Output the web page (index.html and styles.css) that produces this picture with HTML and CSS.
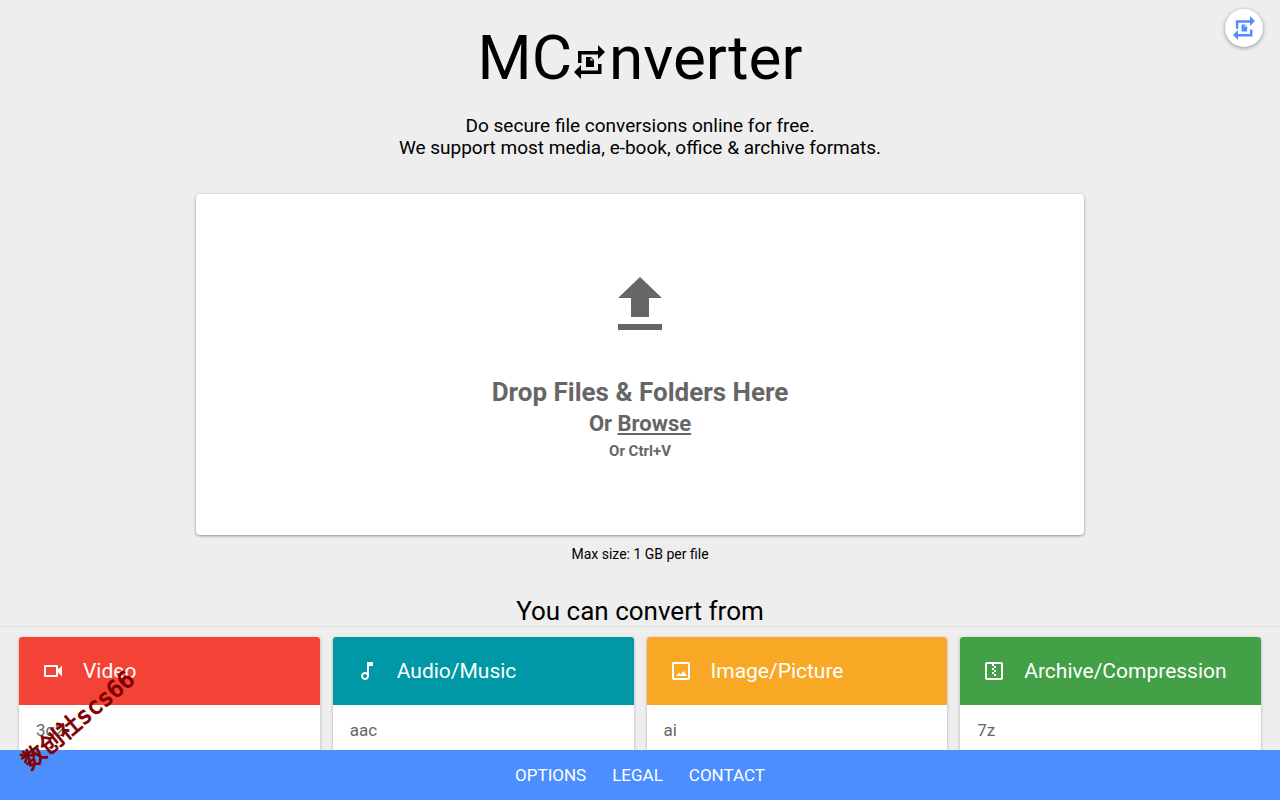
FILE: index.html
```
<!DOCTYPE html>
<html lang="en">
<head>
    <meta charset="utf-8">
    <title>MConverter</title>
    <meta name="viewport" content="width=device-width, initial-scale=1.0">
    <link rel="stylesheet" href="styles.css">
</head>
<body>
    <svg class="symbols" aria-hidden="true">
        <symbol id="logo" viewBox="0 0 31 34">
            <path d="M4 6h20V0l7 7-7 7V9.500H7.500V18H4z"/>
            <path d="M27.500 29H7v5l-7-7 7-7v5.500h17V19h3.500z"/>
            <path fill-rule="evenodd" d="M12 12h5l3 3v7h-8zM16.500 12.800v2.700h2.700z"/>
        </symbol>
    </svg>
    <button class="fab" aria-label="Convert">
        <svg class="fab-icon"><use href="#logo"/></svg>
    </button>
    <main>
        <h1>MC<svg class="title-icon"><use href="#logo"/></svg>nverter</h1>
        <p class="intro">Do secure file conversions online for free.<br>We support most media, e-book, office &amp; archive formats.</p>
        <div class="drop">
            <svg class="drop-icon" viewBox="0 0 44 53"><path d="M22 0l22 21H31v19H13V21H0zM0 47h44v6H0z"/></svg>
            <div class="drop-title">Drop Files &amp; Folders Here</div>
            <div class="drop-browse">Or <a href="#browse">Browse</a></div>
            <div class="drop-paste">Or Ctrl+V</div>
        </div>
        <p class="max">Max size: 1 GB per file</p>
        <h2>You can convert from</h2>
        <div class="cards">
            <section class="card">
                <h3 class="red">
                    <svg viewBox="0 0 24 24"><path d="M15 8v8H5V8h10m1-2H4c-.55 0-1 .45-1 1v10c0 .55.45 1 1 1h12c.55 0 1-.45 1-1v-3.500l4 4v-11l-4 4V7c0-.55-.45-1-1-1z"/></svg>
                    Video
                </h3>
                <a href="#3g2">3g2</a>
            </section>
            <section class="card">
                <h3 class="teal">
                    <svg viewBox="0 0 24 24"><path d="M12 3v10.550c-.59-.34-1.270-.55-2-.55-2.210 0-4 1.790-4 4s1.790 4 4 4 4-1.790 4-4V7h4V3h-6zm-2 16c-1.100 0-2-.9-2-2s.9-2 2-2 2 .9 2 2-.9 2-2 2z"/></svg>
                    Audio/Music
                </h3>
                <a href="#aac">aac</a>
            </section>
            <section class="card">
                <h3 class="orange">
                    <svg viewBox="0 0 24 24"><path d="M19 5v14H5V5h14m0-2H5c-1.100 0-2 .9-2 2v14c0 1.100.9 2 2 2h14c1.100 0 2-.9 2-2V5c0-1.100-.9-2-2-2z"/><path d="M7 17h11l-3.500-5-2.700 3.500-1.800-2z"/></svg>
                    Image/Picture
                </h3>
                <a href="#ai">ai</a>
            </section>
            <section class="card">
                <h3 class="green">
                    <svg viewBox="0 0 24 24"><path d="M19 3H5c-1.100 0-2 .9-2 2v14c0 1.100.9 2 2 2h14c1.100 0 2-.9 2-2V5c0-1.100-.9-2-2-2zm0 16H5V5h5v2h2V5h7z"/><path d="M12 7h2v2h-2zM10 9h2v2h-2zM12 11h2v2h-2zM10 13h2v2h-2zM12 15h2v2h-2z"/></svg>
                    Archive/Compression
                </h3>
                <a href="#7z">7z</a>
            </section>
        </div>
    </main>
    <footer>
        <a href="#options">OPTIONS</a>
        <a href="#legal">LEGAL</a>
        <a href="#contact">CONTACT</a>
    </footer>
    <div class="stamp">数创社scs66</div>
</body>
</html>
```
FILE: styles.css
```
body {
    margin: 0;
    height: 100vh;
    display: flex;
    flex-direction: column;
    background: #eee;
    color: #000;
    font-family: Roboto, sans-serif;
}
.symbols {
    display: none;
}
main {
    flex: 1;
    min-height: 0;
    overflow-y: auto;
    scrollbar-width: none;
    text-align: center;
}
h1 {
    margin: 20px 0 0;
    font-size: 62px;
    line-height: 76px;
    font-weight: 400;
}
.title-icon {
    width: 31px;
    height: 34px;
    margin: 0 4px 0 2px;
}
.intro {
    margin: 19px 0 0;
    font-size: 19px;
    line-height: 22px;
}
.drop {
    box-sizing: border-box;
    max-width: 888px;
    margin: 35px auto 0;
    padding: 83px 20px 71px;
    background: #fff;
    border-radius: 4px;
    box-shadow: 0 1px 3px rgba(0, 0, 0, .4);
    color: #666;
    font-weight: 700;
}
.drop-icon {
    display: block;
    width: 44px;
    height: 53px;
    margin: 0 auto 44px;
    fill: #666;
}
.drop-title {
    font-size: 26px;
    line-height: 36px;
}
.drop-browse {
    font-size: 22px;
    line-height: 28px;
}
.drop-paste {
    font-size: 15px;
    line-height: 26px;
}
.drop a {
    color: #666;
}
.max {
    margin: 10px 0 0;
    font-size: 14px;
    line-height: 18px;
}
h2 {
    margin: 33px 0 0;
    font-size: 26px;
    line-height: 30px;
    font-weight: 400;
    border-bottom: 1px solid #ddd;
}
.cards {
    display: grid;
    grid-template-columns: repeat(4, 1fr);
    gap: 13px;
    padding: 10px 19px 40px;
    text-align: left;
}
.card {
    background: #fff;
    border-radius: 3px;
    box-shadow: 0 1px 3px rgba(0, 0, 0, .3);
    overflow: hidden;
}
.card h3 {
    display: flex;
    align-items: center;
    gap: 18px;
    margin: 0;
    padding: 0 22px;
    height: 68px;
    color: #fff;
    font-size: 21px;
    font-weight: 400;
}
.card svg {
    width: 24px;
    height: 24px;
    fill: #fff;
}
.card a {
    display: block;
    padding: 0 17px;
    font-size: 17px;
    line-height: 50px;
    color: #666;
    text-decoration: none;
}
.red { background: #f44336; }
.teal { background: #0097a7; }
.orange { background: #f9a825; }
.green { background: #43a047; }
footer {
    display: flex;
    justify-content: center;
    gap: 26px;
    background: #4d8eff;
    line-height: 50px;
}
footer a {
    color: #fff;
    font-size: 17px;
    text-decoration: none;
}
.fab {
    position: absolute;
    top: 9px;
    right: 17px;
    width: 38px;
    height: 38px;
    padding: 0;
    display: flex;
    align-items: center;
    justify-content: center;
    border: 0;
    border-radius: 50%;
    background: #fff;
    box-shadow: 0 1px 4px rgba(0, 0, 0, .4);
}
.fab-icon {
    width: 22px;
    height: 24px;
    fill: #4d8eff;
}
.stamp {
    position: absolute;
    left: 9px;
    bottom: 66px;
    color: #800000;
    font-family: "DejaVu Sans Mono", "Noto Sans CJK SC", monospace;
    font-size: 23px;
    line-height: 28px;
    -webkit-text-stroke: 1px #800000;
    transform: rotate(-40deg);
}
```
